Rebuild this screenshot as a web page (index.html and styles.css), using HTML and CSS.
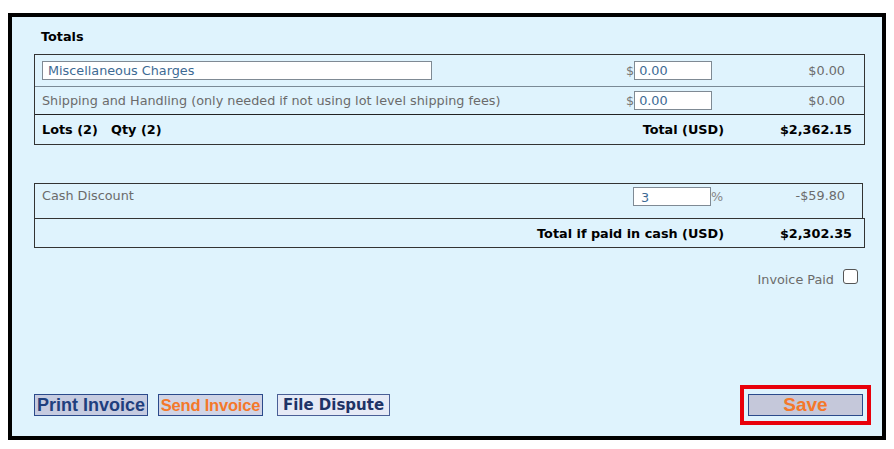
FILE: index.html
```html
<!DOCTYPE html>
<html>
<head>
<meta charset="utf-8">
<link rel="stylesheet" href="styles.css">
</head>
<body>
<div class="frame">
  <div class="heading">Totals</div>
  <div class="table">
    <div class="row row-misc">
      <div class="cell label"><input class="misc-input" type="text" value="Miscellaneous Charges"></div>
      <div class="cell amt"><span class="cur">$</span><input class="num-input" type="text" value="0.00"></div>
      <div class="cell val">$0.00</div>
    </div>
    <div class="row row-ship">
      <div class="cell label">Shipping and Handling (only needed if not using lot level shipping fees)</div>
      <div class="cell amt"><span class="cur">$</span><input class="num-input" type="text" value="0.00"></div>
      <div class="cell val">$0.00</div>
    </div>
    <div class="row row-total">
      <div class="cell label bold">Lots (2)&nbsp;&nbsp;&nbsp;Qty (2)</div>
      <div class="cell amt bold right">Total (USD)</div>
      <div class="cell val bold dark">$2,362.15</div>
    </div>
  </div>

  <div class="table2">
    <div class="row row-cash">
      <div class="cell label top">Cash Discount</div>
      <div class="cell amt top"><input class="num-input pct-input" type="text" value="3"><span class="pct">%</span></div>
      <div class="cell val top">-$59.80</div>
    </div>
  </div>
  <div class="table3">
    <div class="row row-cashtotal">
      <div class="cell bold cash-label">Total if paid in cash (USD)</div>
      <div class="cell val bold dark">$2,302.35</div>
    </div>
  </div>

  <div class="paid">
    <span class="paid-label">Invoice Paid</span>
    <span class="checkbox"></span>
  </div>

  <div class="spacer"></div>

  <div class="actions">
    <div class="btns">
      <button class="btn btn-print">Print Invoice</button>
      <button class="btn btn-send">Send Invoice</button>
      <button class="btn btn-dispute">File Dispute</button>
    </div>
    <div class="save-wrap">
      <button class="btn btn-save">Save</button>
    </div>
  </div>
</div>
</body>
</html>
```

FILE: styles.css
```css
html, body {
  margin: 0;
  padding: 0;
  background: #ffffff;
}

.frame {
  margin: 13px 0 0 8px;
  width: 878px;
  height: 427px;
  box-sizing: border-box;
  border: 4px solid #000;
  background: #dff3fd;
  padding: 0 17px 0 22px;
  display: flex;
  flex-direction: column;
  font-family: "DejaVu Sans", Verdana, sans-serif;
  font-size: 12.8px;
  color: #6b6b6b;
}

.heading {
  height: 37px;
  box-sizing: border-box;
  padding: 12px 0 0 7px;
  font-weight: bold;
  color: #000;
}

.table {
  border: 1px solid #333;
}

.row {
  display: grid;
  grid-template-columns: 1fr 110px 134px;
  align-items: center;
}

.row-misc {
  height: 31px;
  border-bottom: 1px solid #7a8a96;
}

.row-ship {
  height: 27px;
  border-bottom: 1px solid #222;
}

.row-total {
  height: 29px;
}

.cell {
  box-sizing: border-box;
  white-space: nowrap;
}

.label {
  padding-left: 7px;
}

.amt {
  padding-left: 6px;
  display: flex;
  align-items: center;
}

.amt.right {
  justify-content: flex-end;
  padding-right: 6px;
  padding-left: 0;
}

.val {
  text-align: right;
  padding-right: 19px;
}

.val.dark {
  padding-right: 12px;
}

.bold {
  font-weight: bold;
  color: #000;
}

.misc-input {
  width: 390px;
  height: 19px;
  box-sizing: border-box;
  border: 1px solid #7f8a94;
  background: #fff;
  font-family: "DejaVu Sans", Verdana, sans-serif;
  font-size: 12.8px;
  color: #3d6a94;
  padding: 0 5px;
  margin: 0;
  outline: none;
}

.cur {
  color: #777;
  margin-right: 0;
}

.num-input {
  width: 78px;
  height: 19px;
  box-sizing: border-box;
  border: 1px solid #7f8a94;
  background: #fff;
  font-family: "DejaVu Sans", Verdana, sans-serif;
  font-size: 12.8px;
  color: #3d6a94;
  padding: 0 4px;
  margin: 0;
  outline: none;
}

.pct-input {
  padding-left: 7px;
  padding-top: 2px;
}

.pct {
  color: #888;
}

.table2 {
  margin-top: 38px;
  margin-right: 2px;
  border: 1px solid #333;
  border-bottom: none;
}

.table2 .row {
  grid-template-columns: 1fr 110px 132px;
}

.row-cash {
  height: 34px;
  align-items: start;
}

.row-cash .label {
  padding-top: 4px;
}

.row-cash .amt {
  padding-top: 3px;
  padding-left: 13px;
}

.row-cash .val {
  padding-top: 4px;
  padding-right: 17px;
}

.table3 {
  border: 1px solid #333;
}

.table3 .row-cashtotal {
  grid-template-columns: 1fr 134px;
  height: 28px;
}

.cash-label {
  text-align: right;
  padding-right: 6px;
}

.paid {
  display: flex;
  justify-content: flex-end;
  align-items: center;
  margin-top: 18px;
  padding-right: 7px;
}

.paid-label {
  color: #6b6b6b;
  margin-right: 9px;
  padding-top: 6px;
}

.checkbox {
  width: 13px;
  height: 13px;
  border: 1px solid #555;
  border-radius: 3px;
  background: #fff;
}

.spacer {
  flex: 1;
}

.actions {
  display: flex;
  justify-content: space-between;
  align-items: center;
  margin-right: -6px;
  margin-bottom: 11px;
}

.btns {
  display: flex;
  align-items: center;
}

.btn {
  height: 22px;
  box-sizing: border-box;
  border: 1px solid #2b4a8b;
  padding: 0;
  margin: 0;
  font-weight: bold;
  line-height: 20px;
  cursor: pointer;
}

.btn-print {
  width: 114px;
  background: #c6cbe0;
  color: #1f3f7e;
  font-family: "Liberation Sans", Arial, sans-serif;
  font-size: 18px;
}

.btn-send {
  width: 105px;
  margin-left: 10px;
  background: #d0d4e6;
  color: #f4782a;
  font-family: "Liberation Sans", Arial, sans-serif;
  font-size: 16.5px;
  letter-spacing: -0.2px;
}

.btn-dispute {
  width: 113px;
  margin-left: 14px;
  background: #e6eaf6;
  color: #1f3366;
  font-family: "DejaVu Sans", Verdana, sans-serif;
  font-size: 15px;
  border-color: #4a5f96;
}

.save-wrap {
  border: 4px solid #e8000b;
  padding: 5px 4px;
}

.btn-save {
  display: block;
  width: 115px;
  background: #c5c8da;
  color: #f4782a;
  font-family: "Liberation Sans", Arial, sans-serif;
  font-size: 19px;
}
```
